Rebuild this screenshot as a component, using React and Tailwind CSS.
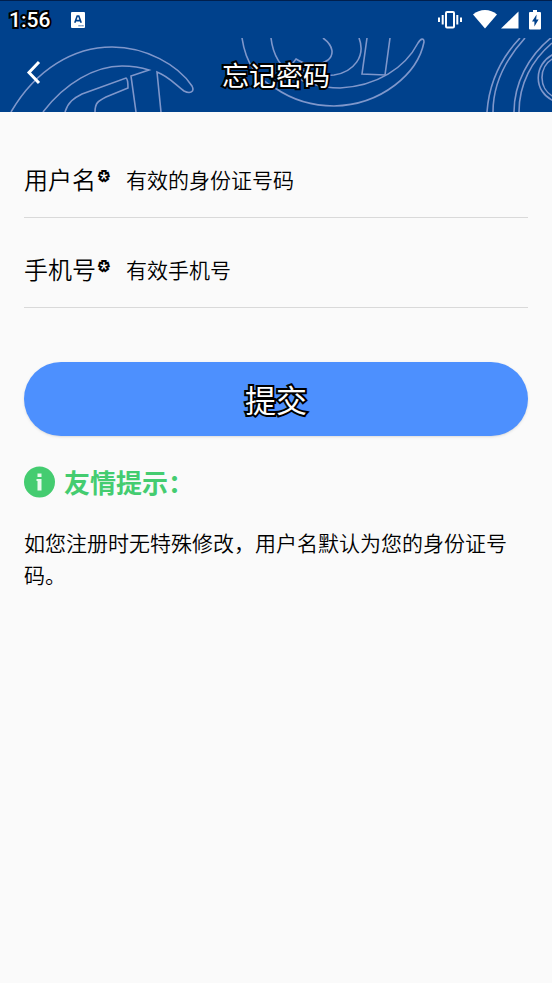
import { useState } from "react";

const outline =
  "text-white [paint-order:stroke_fill] [-webkit-text-stroke:4px_black]";

const StatusBar = () => (
  <div className="h-[38px] flex items-center border-t border-[#001f4d] pl-[9px] pr-[11px]">
    <span
      className={`font-['Roboto','Noto_Sans_CJK_SC',sans-serif] text-[21px] leading-6 font-medium ${outline}`}
    >
      1:56
    </span>
    <svg className="ml-5 w-4 h-4" viewBox="0 0 16 16" aria-hidden="true">
      <rect x="1" y="0" width="14" height="16" rx="1" fill="#fff" />
      <path
        d="M4.8 10.8 L7.2 4 H8.8 L11.2 10.8 M6 8.6 H10"
        fill="none"
        stroke="#00418c"
        strokeWidth="1.6"
      />
      <path d="M8.5 13.8 H13.5" stroke="#00418c" strokeDasharray="1.2 .7" />
    </svg>
    <div className="ml-auto flex items-center">
      <svg className="w-[26px] h-5" viewBox="0 0 26 20" aria-hidden="true">
        <g fill="none" stroke="#fff">
          <rect x="9" y="2" width="8" height="15.5" rx="1" strokeWidth="2" />
          <path
            d="M5.7 5 V14.5 M20.3 5 V14.5 M2 7.5 V12 M24 7.5 V12"
            strokeWidth="2"
          />
        </g>
      </svg>
      <svg className="ml-[10px] w-6 h-5" viewBox="0 0 24 20" aria-hidden="true">
        <path d="M0 4.5 C6.5 -1.5 17.5 -1.5 24 4.5 L12 18.5 Z" fill="#fff" />
      </svg>
      <svg className="ml-1 w-[18px] h-5" viewBox="0 0 18 20" aria-hidden="true">
        <path d="M0 18.5 L17.5 1.5 V18.5 Z" fill="#fff" />
      </svg>
      <svg className="ml-[10px] w-3 h-5" viewBox="0 0 12 20" aria-hidden="true">
        <path
          d="M4 0 H8 V2 H11 Q12 2 12 3 V18.5 Q12 19.5 11 19.5 H1 Q0 19.5 0 18.5 V3 Q0 2 1 2 H4 Z"
          fill="#fff"
        />
        <path d="M7.6 4.5 L3 11.5 H5.4 V16.5 L9.6 9.5 H7.2 Z" fill="#00418c" />
      </svg>
    </div>
  </div>
);

// line art behind the title
const HeaderPattern = () => (
  <svg
    className="absolute inset-0 w-full h-full"
    viewBox="0 38 552 74"
    preserveAspectRatio="xMidYMid slice"
    fill="none"
    stroke="#7f97cb"
    strokeWidth="1.6"
    aria-hidden="true"
  >
    <path d="M11 112 C36 69 74 47 112 47 C146 47 178 65 192 86 C195 92 190 94 184 91 C176 85 168 76 157 72 L161 112" />
    <path d="M43 112 C65 83 95 66 122 66 C135 66 143 68 149 70 L131 76 L136 112" />
    <path d="M65 112 C68 102 74 98 82 94 L126 78 Q128 79 128 88 L106 97 C98 101 95 103 95 112" />
    <path d="M242 38 C246 65 258 79 275 88 C294 101 314 106 334 106 C382 105 418 73 424 42 C424 38 421 38 418 43 C405 68 377 86 340 88 C305 87 275 74 271 38" />
    <path d="M323 38 C334 46 334 55 328 60 C319 67 305 65 296 59 L293 63 C304 75 320 76 334 75 C354 72 366 56 359 38" />
    <path d="M367 38 L362 74 L385 75 L390 38" />
    <path d="M520 38 C500 59 489 84 487 112 M525 38 C505 60 493 86 493 112" />
    <path d="M552 37 C528 56 514 84 514 112 M552 43 C532 60 519 84 519 112" />
    <path d="M554 54 C533 64 533 92 554 101 M554 58 C538 66 538 89 554 97" />
  </svg>
);

const Field = ({ id, label, placeholder, value, onChange }) => (
  <div className="h-[74px] flex items-center border-b border-[#d9d9d9] pb-1">
    <label
      htmlFor={id}
      className="flex shrink-0 text-2xl font-[350] text-black"
    >
      {label}
      <span
        className={`ml-1 w-3 font-['Roboto',sans-serif] text-lg leading-8 font-normal ${outline}`}
      >
        *
      </span>
    </label>
    <input
      id={id}
      type="text"
      value={value}
      onChange={onChange}
      placeholder={placeholder}
      className="ml-[14px] min-w-0 flex-1 bg-transparent text-[21px] leading-8 font-[350] text-black placeholder:text-black outline-none"
    />
  </div>
);

const App = () => {
  const [username, setUsername] = useState("");
  const [phone, setPhone] = useState("");

  return (
    <div className="min-h-screen bg-[#fafafa] font-['Noto_Sans_CJK_SC',sans-serif]">
      <header className="bg-[#00418c]">
        <StatusBar />
        <div className="relative h-[74px] flex items-center justify-center">
          <HeaderPattern />
          <button
            type="button"
            aria-label="返回"
            className="absolute left-6 top-5 w-6 h-8"
          >
            <svg viewBox="0 0 24 32" fill="none" aria-hidden="true">
              <path d="M15 4 L5 14.5 L15 25" stroke="#fff" strokeWidth="3" />
            </svg>
          </button>
          <h1 className={`relative text-[27px] leading-10 ${outline}`}>
            忘记密码
          </h1>
        </div>
      </header>

      <main className="px-6 pt-8">
        <form onSubmit={(e) => e.preventDefault()}>
          <div className="flex flex-col gap-4">
            <Field
              id="username"
              label="用户名"
              placeholder="有效的身份证号码"
              value={username}
              onChange={(e) => setUsername(e.target.value)}
            />
            <Field
              id="phone"
              label="手机号"
              placeholder="有效手机号"
              value={phone}
              onChange={(e) => setPhone(e.target.value)}
            />
          </div>
          <button
            type="submit"
            className="mt-[54px] w-full h-[74px] rounded-full bg-[#4d90fe] shadow-sm"
          >
            <span className={`text-[31px] leading-10 ${outline}`}>提交</span>
          </button>
        </form>

        <section>
          <h2 className="mt-[30px] flex items-center gap-2 text-[26px] leading-8 font-bold text-[#44cc70]">
            <svg className="w-8 h-8" viewBox="0 0 32 32" aria-hidden="true">
              <circle cx="15.5" cy="16" r="15.5" fill="#44cc70" />
              <path
                d="M13.5 7.5 H17.5 V11 H13.5 Z M12.5 13 H17.5 V24.5 H13.5 V15 H12.5 Z"
                fill="#e9faee"
              />
            </svg>
            友情提示：
          </h2>
          <p className="mt-7 text-[21px] leading-8 font-[350] text-black">
            如您注册时无特殊修改，用户名默认为您的身份证号码。
          </p>
        </section>
      </main>
    </div>
  );
};

export default App;
